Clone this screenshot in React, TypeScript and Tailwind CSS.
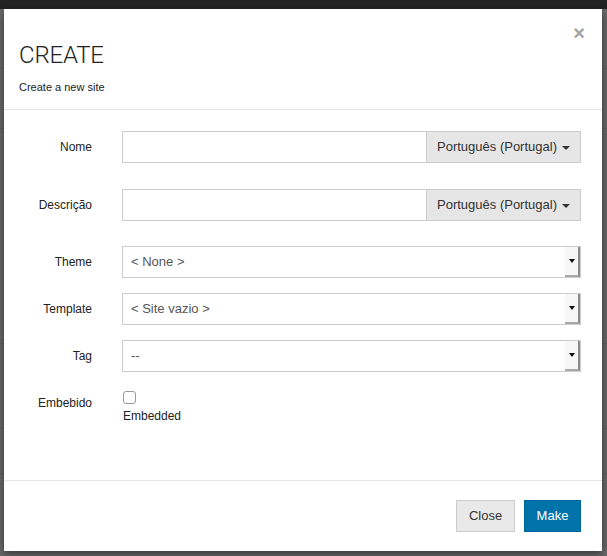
import React from 'react';

const font = { fontFamily: '"Liberation Sans", Arial, sans-serif' };

function LangInput() {
  return (
    <div className="flex h-[32px] w-[459px]">
      <input type="text" className="h-full w-[305px] border border-[#ccc] bg-white px-2 text-[13px] outline-none" />
      <button className="flex h-full flex-1 items-center justify-center gap-[5px] border border-l-0 border-[#ccc] bg-[#e6e6e6] text-[13px] text-[#333]">
        Português (Portugal)
        <span className="mt-[1px] h-0 w-0 border-x-[4px] border-t-[4px] border-x-transparent border-t-[#333]" />
      </button>
    </div>
  );
}

function FakeSelect({ value }: { value: string }) {
  return (
    <div className="flex h-[32px] w-[459px] border border-[#ccc] bg-white">
      <div className="flex flex-1 items-center pl-[8px] text-[13px] text-[#555]">{value}</div>
      <div className="flex w-[15px] items-center justify-center border-r-[2px] border-b-[2px] border-r-[#8a8a8a] border-b-[#a8a8a8] bg-[#f7f7f7]">
        <span className="h-0 w-0 border-x-[3px] border-t-[4px] border-x-transparent border-t-[#111]" />
      </div>
    </div>
  );
}

function Row({ label, children, className = '' }: { label: string; children: React.ReactNode; className?: string }) {
  return (
    <div className={`flex items-center ${className}`}>
      <label className="w-[88px] text-right text-[12px] text-[#222]">{label}</label>
      <div className="ml-[30px]">{children}</div>
    </div>
  );
}

export default function App() {
  return (
    <div className="relative h-[556px] w-[607px] overflow-hidden bg-[#6a6a6a]" style={font}>
      <div className="h-[9px] bg-[#222]" />
      {/* faint page rows behind the overlay */}
      <div className="flex flex-col">
        <div className="h-[60px] border-b border-[#5f5f5f]" />
        <div className="h-[60px] border-b border-[#5f5f5f]" />
        <div className="h-[215px] border-b border-[#5f5f5f]" />
        <div className="h-[85px] border-b border-[#5f5f5f]" />
        <div className="h-[45px] border-b border-[#5f5f5f]" />
      </div>

      <div className="absolute left-[4px] top-[9px] flex h-[542px] w-[598px] flex-col bg-white shadow-[0_3px_9px_rgba(0,0,0,0.5)]">
        {/* Header */}
        <div className="relative h-[101px] border-b border-[#e5e5e5] px-[15px] pt-[33px]">
          <button className="absolute right-[17px] top-[14px] text-[20px] font-bold leading-none text-[#a3a3a3]">×</button>
          <h4 className="text-[24px] font-light leading-[26px] tracking-[-0.2px] text-[#222]" style={{ fontFamily: 'Roboto, "Liberation Sans", sans-serif' }}>
            CREATE
          </h4>
          <p className="mt-[11px] text-[11px] text-[#222]">Create a new site</p>
        </div>

        {/* Body */}
        <div className="flex flex-1 flex-col pt-[21px]">
          <Row label="Nome">
            <LangInput />
          </Row>
          <Row label="Descrição" className="mt-[26px]">
            <LangInput />
          </Row>
          <Row label="Theme" className="mt-[25px]">
            <FakeSelect value="< None >" />
          </Row>
          <Row label="Template" className="mt-[15px]">
            <FakeSelect value="< Site vazio >" />
          </Row>
          <Row label="Tag" className="mt-[15px]">
            <FakeSelect value="--" />
          </Row>
          <div className="mt-[19px] flex items-start">
            <label className="mt-[3px] w-[88px] text-right text-[12px] leading-[18px] text-[#222]">Embebido</label>
            <div className="ml-[31px] flex flex-col">
              <span className="block h-[13px] w-[13px] rounded-[3px] border border-[#9a9a9a] bg-white" />
              <span className="mt-[3px] text-[12px] leading-[18px] text-[#222]">Embedded</span>
            </div>
          </div>
        </div>

        {/* Footer */}
        <div className="flex h-[71px] items-start justify-end gap-[9px] border-t border-[#e5e5e5] pr-[21px] pt-[19px]">
          <button className="h-[32px] w-[59px] border border-[#ccc] bg-[#e9e9e9] text-[13px] text-[#333]">Close</button>
          <button className="h-[32px] w-[57px] border border-[#006799] bg-[#0073aa] text-[13px] text-white">Make</button>
        </div>
      </div>
    </div>
  );
}
